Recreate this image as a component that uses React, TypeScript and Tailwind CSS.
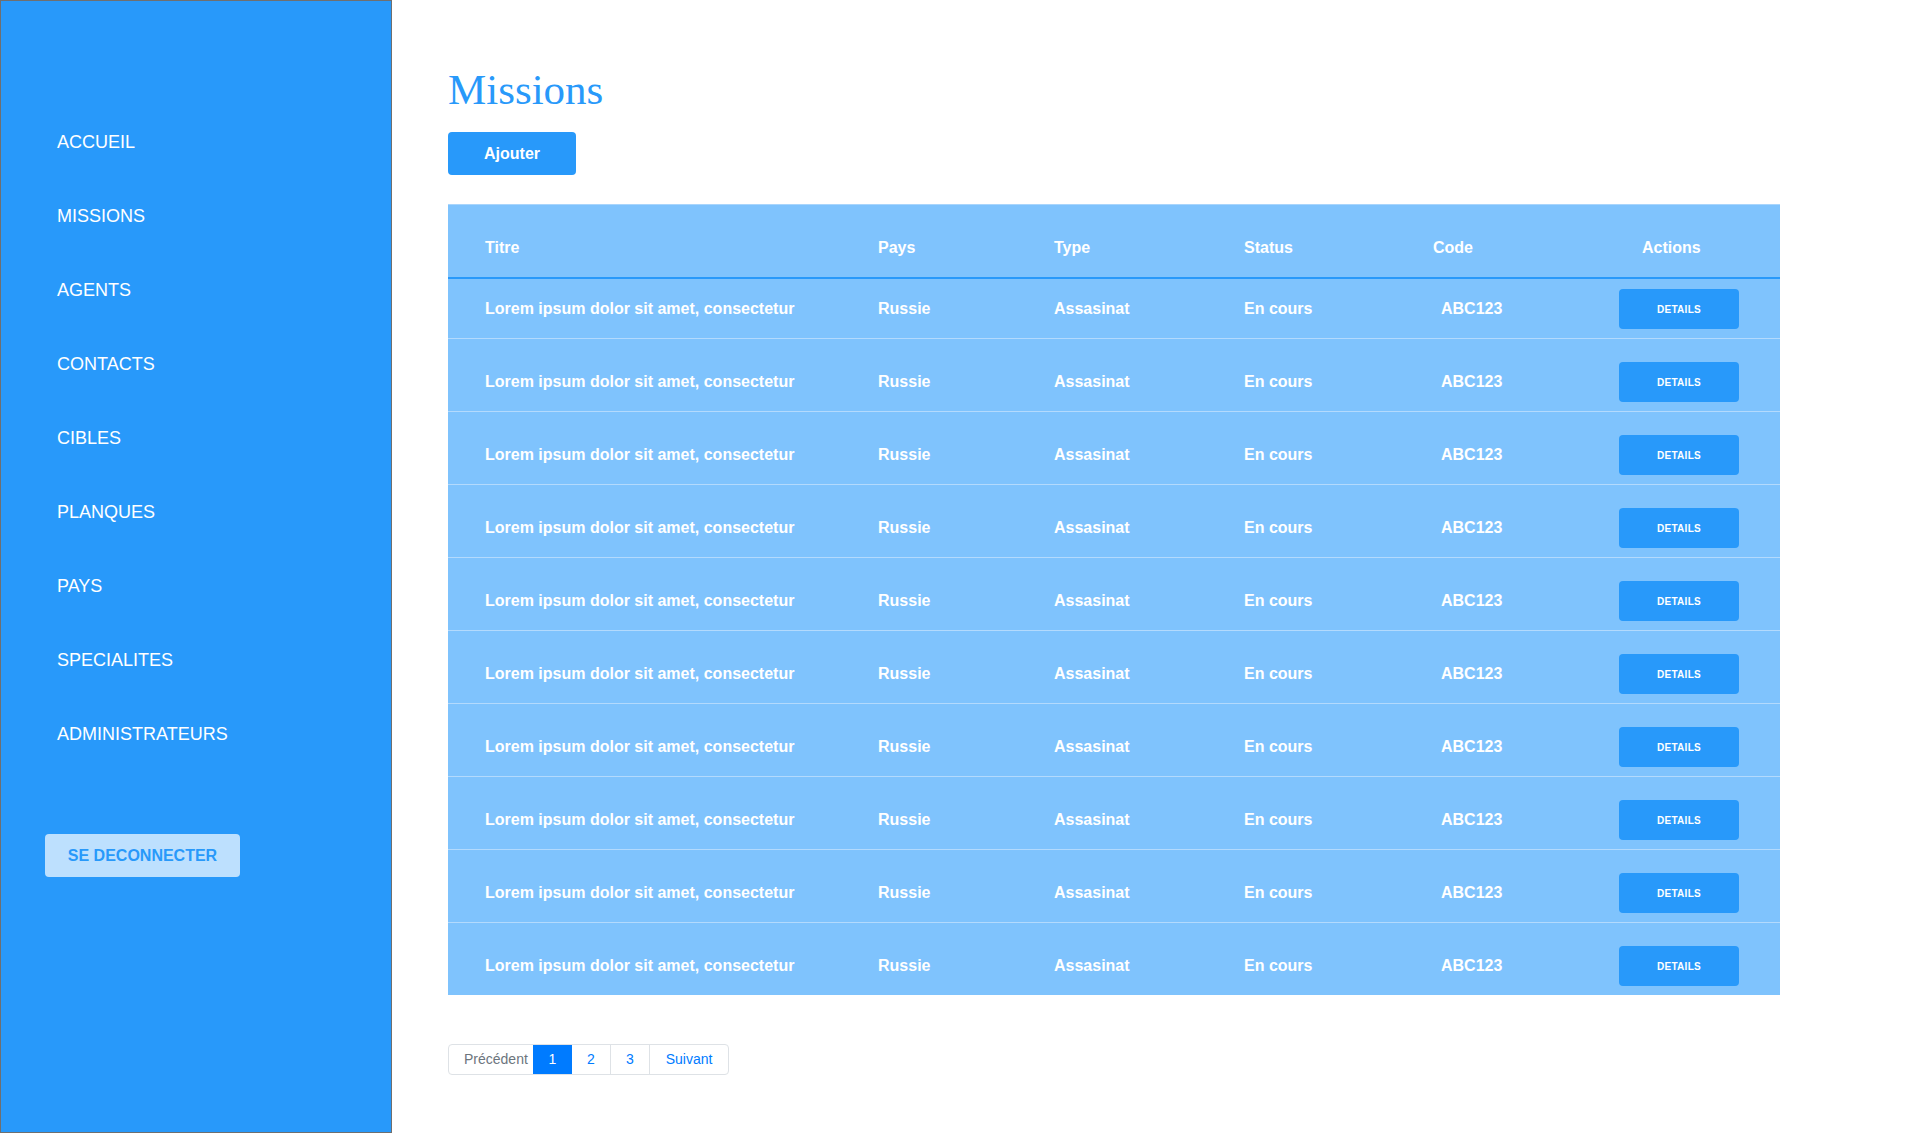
import React from "react";

const NAV = ["ACCUEIL", "MISSIONS", "AGENTS", "CONTACTS", "CIBLES", "PLANQUES", "PAYS", "SPECIALITES", "ADMINISTRATEURS"];

function Row({ first, last }: { first: boolean; last: boolean }) {
  return (
    <div className={`${first ? "" : "pt-[13px]"} ${last ? "" : "border-b border-[#b3dafd]"}`}>
      <div className="flex h-[59px] items-center pl-[37px] text-[16px] font-bold text-white">
        <div className="w-[393px] shrink-0">Lorem ipsum dolor sit amet, consectetur</div>
        <div className="w-[176px] shrink-0">Russie</div>
        <div className="w-[190px] shrink-0">Assasinat</div>
        <div className="w-[189px] shrink-0">En cours</div>
        <div className="w-[157px] shrink-0 pl-[8px]">ABC123</div>
        <div className="flex-1 pl-[29px]">
          <button className="flex h-[40px] w-[120px] items-center justify-center rounded-[4px] bg-[#2899fa] pt-[1px] text-[10px] font-bold tracking-[0.3px] text-white">
            DETAILS
          </button>
        </div>
      </div>
    </div>
  );
}

export default function App() {
  return (
    <div className="flex h-screen w-full bg-white font-['Liberation_Sans',Arial,sans-serif]">
      <aside className="flex h-full w-[392px] shrink-0 flex-col border border-[#6f6f6f] bg-[#2899fa] pt-[104px]">
        <nav className="flex flex-col">
          {NAV.map((n) => (
            <a key={n} className="flex h-[74px] items-center pl-[56px] text-[18px] text-white">
              {n}
            </a>
          ))}
        </nav>
        <div className="mt-[63px] pl-[44px]">
          <button className="flex h-[43px] w-[195px] items-center justify-center rounded-[4px] bg-[#bde0fe] text-[16px] font-bold text-[#2899fa]">
            SE DECONNECTER
          </button>
        </div>
      </aside>
      <main className="flex-1 pl-[56px] pt-[68px]">
        <h1 className="mb-[21px] font-['Liberation_Serif','Times_New_Roman',serif] text-[43px] leading-[43px] text-[#2899fa]">
          Missions
        </h1>
        <button className="flex h-[43px] w-[128px] items-center justify-center rounded-[4px] bg-[#2899fa] text-[16px] font-bold text-white">
          Ajouter
        </button>
        <div className="mt-[29px] w-[1332px] border-t border-[#a9d5fc] bg-[#7fc3fd]">
          <div className="border-b-2 border-[#2899fa] pt-[13px]">
            <div className="flex h-[59px] items-center pl-[37px] text-[16px] font-bold text-white">
              <div className="w-[393px] shrink-0">Titre</div>
              <div className="w-[176px] shrink-0">Pays</div>
              <div className="w-[190px] shrink-0">Type</div>
              <div className="w-[189px] shrink-0">Status</div>
              <div className="w-[157px] shrink-0">Code</div>
              <div className="flex-1 pl-[52px]">Actions</div>
            </div>
          </div>
          {Array.from({ length: 10 }).map((_, i) => (
            <Row key={i} first={i === 0} last={i === 9} />
          ))}
        </div>
        <div className="mt-[49px] flex h-[31px] w-fit rounded-[4px] border border-[#dee2e6] text-[14px]">
          <div className="flex w-[84px] items-center pl-[15px] text-[#6c757d]">Précédent</div>
          <div className="flex w-[39px] items-center justify-center bg-[#007bff] text-white">1</div>
          <div className="flex w-[39px] items-center justify-center border-r border-[#dee2e6] text-[#007bff]">2</div>
          <div className="flex w-[39px] items-center justify-center border-r border-[#dee2e6] text-[#007bff]">3</div>
          <div className="flex w-[78px] items-center justify-center text-[#007bff]">Suivant</div>
        </div>
      </main>
    </div>
  );
}
